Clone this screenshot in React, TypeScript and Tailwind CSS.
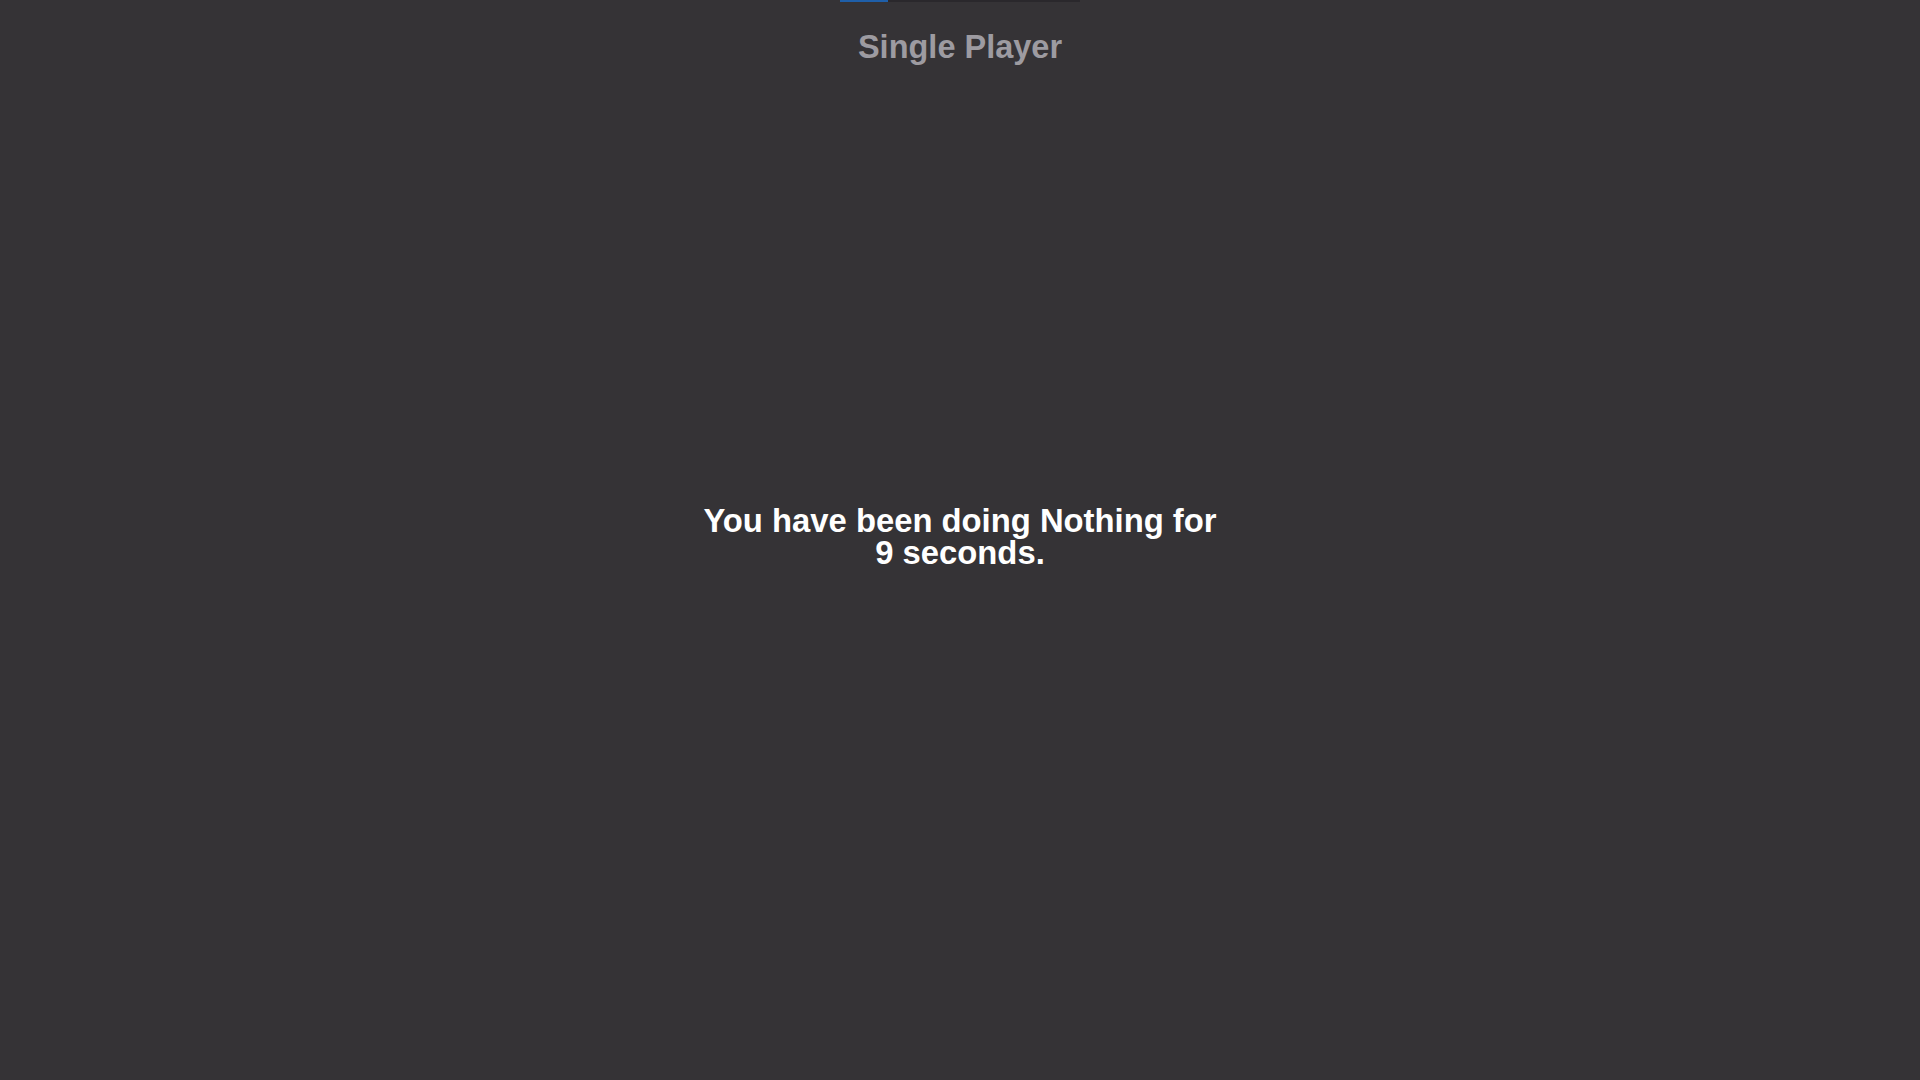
import React from "react";

export default function App() {
  return (
    <div
      className="w-[1920px] h-[1080px] bg-[#353336] flex flex-col items-center overflow-hidden"
      style={{ fontFamily: '"Liberation Sans", Arial, sans-serif' }}
    >
      <div className="w-[240px] h-[2px] bg-[#2a282c] flex">
        <div className="w-[48px] h-full bg-[#1f5fa9]" />
      </div>
      <h1 className="mt-[29px] text-[32.5px] leading-[32px] font-bold text-[#9d9ba1]">
        Single Player
      </h1>
      <p className="mt-[442px] text-[32.8px] leading-[32px] font-bold text-white text-center">
        You have been doing Nothing for
        <br />9 seconds.
      </p>
    </div>
  );
}
